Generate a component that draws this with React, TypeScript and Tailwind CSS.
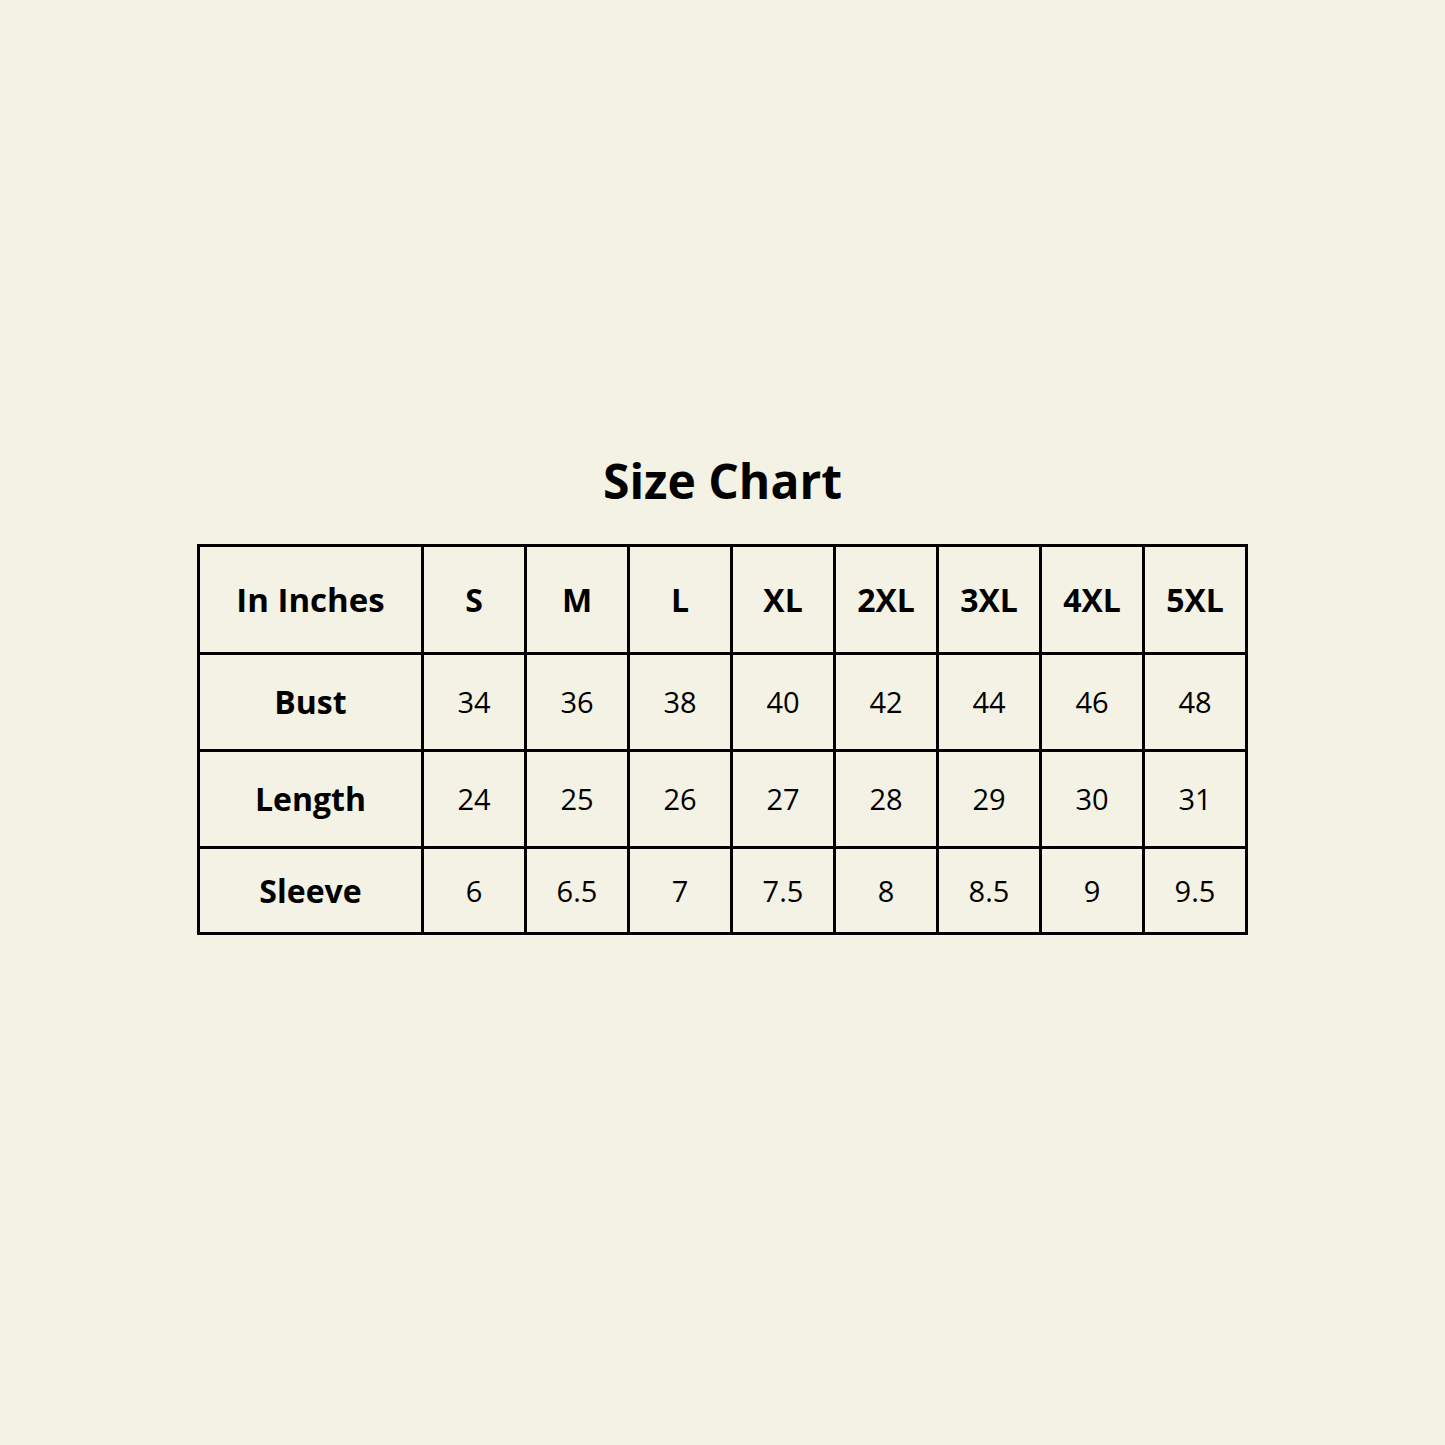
import React from "react";

const sizes = ["S", "M", "L", "XL", "2XL", "3XL", "4XL", "5XL"];
const rows: { label: string; values: string[]; h: string }[] = [
  { label: "Bust", values: ["34", "36", "38", "40", "42", "44", "46", "48"], h: "h-[97px]" },
  { label: "Length", values: ["24", "25", "26", "27", "28", "29", "30", "31"], h: "h-[97px]" },
  { label: "Sleeve", values: ["6", "6.5", "7", "7.5", "8", "8.5", "9", "9.5"], h: "h-[86px]" },
];

export default function App() {
  return (
    <div
      className="w-[1445px] h-[1445px] bg-[#f3f2e4] flex flex-col items-center text-black"
      style={{ fontFamily: '"Open Sans", "Liberation Sans", sans-serif' }}
    >
      <h1 className="mt-[449px] text-[48px] leading-[64px] font-bold">Size Chart</h1>
      <table className="mt-[31px] border-collapse border-[3px] border-black table-fixed w-[1050px]">
        <colgroup>
          <col className="w-[224px]" />
          {sizes.map((s) => (
            <col key={s} className="w-[103px]" />
          ))}
        </colgroup>
        <tbody>
          <tr className="h-[108px]">
            <td className="border-[3px] border-black text-center text-[33px] font-bold">In Inches</td>
            {sizes.map((s) => (
              <td key={s} className="border-[3px] border-black text-center text-[32px] font-bold">
                {s}
              </td>
            ))}
          </tr>
          {rows.map((r) => (
            <tr key={r.label} className={r.h}>
              <td className="border-[3px] border-black text-center text-[32px] font-bold">{r.label}</td>
              {r.values.map((v, i) => (
                <td key={i} className="border-[3px] border-black text-center text-[29px] font-normal">
                  {v}
                </td>
              ))}
            </tr>
          ))}
        </tbody>
      </table>
    </div>
  );
}
